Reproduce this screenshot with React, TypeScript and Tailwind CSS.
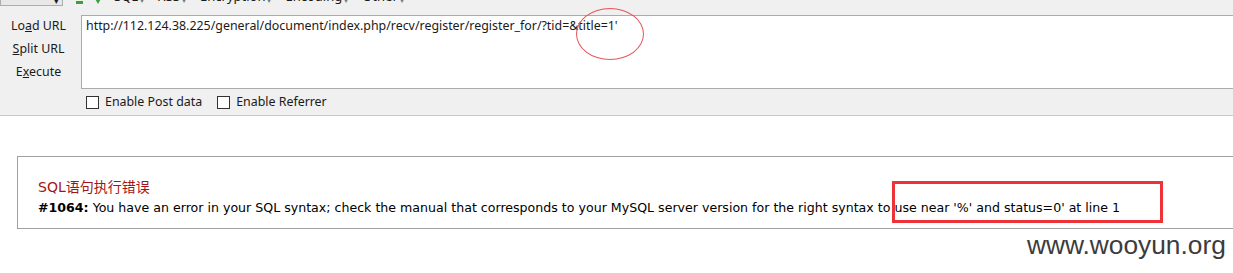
import React from "react";

const ui = { fontFamily: '"Noto Sans", "Open Sans", Arial, sans-serif' };
const verdana = { fontFamily: '"DejaVu Sans", Verdana, "Noto Sans CJK SC", sans-serif' };

function Menu({ label }: { label: string }) {
  return (
    <span className="flex items-end gap-[2px]">
      {label}
      <span className="text-[8px] text-[#777] leading-none mb-[2px]">▾</span>
    </span>
  );
}

export default function App() {
  return (
    <div className="relative w-[1233px] h-[273px] overflow-hidden bg-white">
      <section className="h-[116px] bg-[#f0f0f0] border-b border-[#c9c9c9] text-[12.4px] text-[#1a1a1a]" style={ui}>
        {/* toolbar, mostly scrolled off the top */}
        <div className="h-[7px] relative overflow-hidden">
          <div className="absolute left-0 top-[-14px] flex items-end h-[20px]">
            <div className="w-[63px] h-[18px] border border-[#adadad] bg-[#e8e8e8] flex justify-end pr-[3px] text-[9px] leading-none items-end">▾</div>
            <div className="ml-[13px] flex items-end gap-[11px] pb-[2px]">
              <span className="w-[7px] h-[3px] bg-[#3aa13a]" />
              <span className="w-0 h-0 border-l-[4px] border-r-[4px] border-t-[7px] border-l-transparent border-r-transparent border-t-[#3aa13a]" />
            </div>
            <div className="ml-[12px] flex gap-[14px] leading-[20px] text-[13px]">
              <Menu label="SQL" />
              <Menu label="XSS" />
              <Menu label="Encryption" />
              <Menu label="Encoding" />
              <Menu label="Other" />
            </div>
          </div>
        </div>

        <div className="flex mt-[8px]">
          <div className="w-[77px] flex flex-col items-center pt-[2px] gap-[6px] leading-[17px]">
            <span>Lo<u>a</u>d URL</span>
            <span><u>S</u>plit URL</span>
            <span>E<u>x</u>ecute</span>
          </div>
          <div className="ml-[4px] flex-1 h-[74px] bg-white border border-[#ababab] border-r-0 px-[4px] pt-[1px] leading-[18px]">
            http://112.124.38.225/general/document/index.php/recv/register/register_for/?tid=&amp;title=1'
          </div>
        </div>

        <div className="flex items-center ml-[86px] mt-[7px] h-[13px] leading-none">
          <span className="w-[13px] h-[13px] border border-[#333] bg-white" />
          <span className="ml-[6px]">Enable Post data</span>
          <span className="ml-[15px] w-[13px] h-[13px] border border-[#333] bg-white" />
          <span className="ml-[6px]">Enable Referrer</span>
        </div>
      </section>

      <section className="mt-[40px] ml-[17px] h-[73px] border border-[#a0a0a0] border-r-0 pl-[20px] pt-[21px]" style={verdana}>
        <div className="text-[#a31515] text-[14px] leading-[19px]" style={{ fontFamily: '"DejaVu Sans", "Noto Sans CJK SC", sans-serif' }}>
          SQL语句执行错误
        </div>
        <div className="mt-[2px] leading-[18px] text-[12.6px] text-black whitespace-nowrap">
          <b>#1064:</b> You have an error in your SQL syntax; check the manual that corresponds to your MySQL server version for the right syntax to use near '%' and status=0' at line 1
        </div>
      </section>

      {/* annotation marks drawn over the screenshot */}
      <span className="absolute left-[576px] top-[8px] w-[68px] h-[52px] rounded-[50%] border border-[#e5565b]" />
      <span className="absolute left-[892px] top-[181px] w-[271px] h-[42px] border-[3px] border-[#ee3338]" />

      <div className="absolute left-[1027px] top-[232px] text-[26.3px] leading-none text-[#3c3c3c]" style={{ fontFamily: '"Liberation Sans", Arial, sans-serif' }}>
        www.wooyun.org
      </div>
    </div>
  );
}
